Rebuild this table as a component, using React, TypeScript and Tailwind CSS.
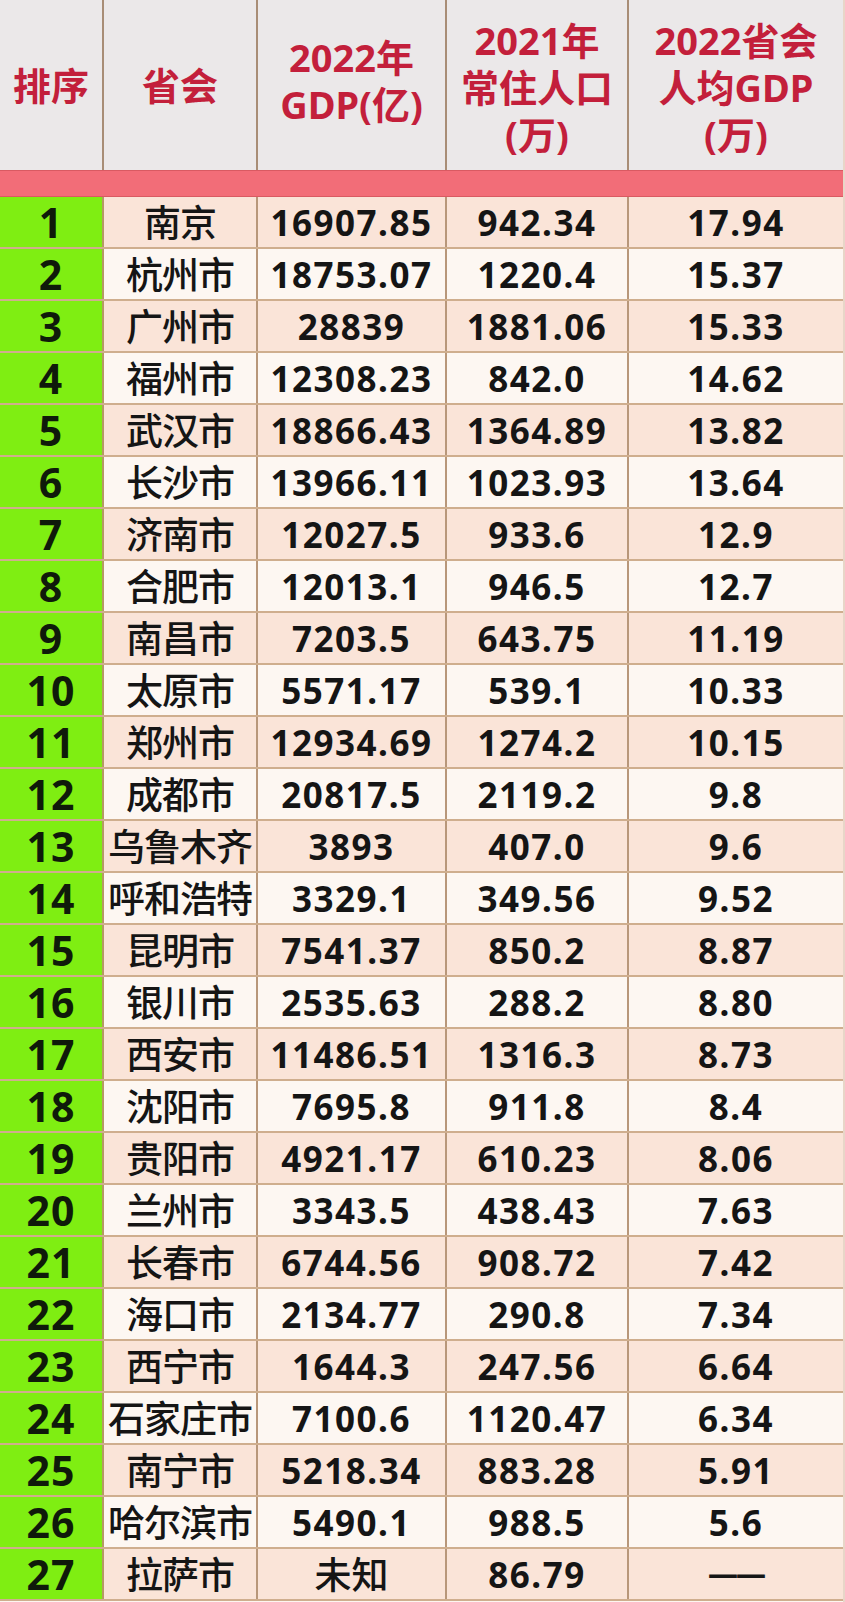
import React from "react";

const rows: [string, string, string, string][] = [
  ["南京", "16907.85", "942.34", "17.94"],
  ["杭州市", "18753.07", "1220.4", "15.37"],
  ["广州市", "28839", "1881.06", "15.33"],
  ["福州市", "12308.23", "842.0", "14.62"],
  ["武汉市", "18866.43", "1364.89", "13.82"],
  ["长沙市", "13966.11", "1023.93", "13.64"],
  ["济南市", "12027.5", "933.6", "12.9"],
  ["合肥市", "12013.1", "946.5", "12.7"],
  ["南昌市", "7203.5", "643.75", "11.19"],
  ["太原市", "5571.17", "539.1", "10.33"],
  ["郑州市", "12934.69", "1274.2", "10.15"],
  ["成都市", "20817.5", "2119.2", "9.8"],
  ["乌鲁木齐", "3893", "407.0", "9.6"],
  ["呼和浩特", "3329.1", "349.56", "9.52"],
  ["昆明市", "7541.37", "850.2", "8.87"],
  ["银川市", "2535.63", "288.2", "8.80"],
  ["西安市", "11486.51", "1316.3", "8.73"],
  ["沈阳市", "7695.8", "911.8", "8.4"],
  ["贵阳市", "4921.17", "610.23", "8.06"],
  ["兰州市", "3343.5", "438.43", "7.63"],
  ["长春市", "6744.56", "908.72", "7.42"],
  ["海口市", "2134.77", "290.8", "7.34"],
  ["西宁市", "1644.3", "247.56", "6.64"],
  ["石家庄市", "7100.6", "1120.47", "6.34"],
  ["南宁市", "5218.34", "883.28", "5.91"],
  ["哈尔滨市", "5490.1", "988.5", "5.6"],
  ["拉萨市", "未知", "86.79", "——"],
];

const cols = "grid grid-cols-[104px_154px_189px_182px_1fr]";

export default function App() {
  return (
    <div
      className="w-[845px] h-[1602px] overflow-hidden bg-[#fdf6f0] border-r-2 border-[#e8d6c8] leading-none"
      style={{ fontFamily: '"Noto Sans", "Noto Sans CJK SC", sans-serif' }}
    >
      {/* 表头 */}
      <div className={`${cols} h-[170px] bg-[#ebe8e9] text-[#c31f3b] font-bold text-[38px] leading-[47px] text-center`}>
        <div className="flex items-center justify-center border-r-2 border-[#a88d76]">排序</div>
        <div className="flex items-center justify-center border-r-2 border-[#a88d76]">省会</div>
        <div className="flex flex-col items-center justify-center border-r-2 border-[#a88d76] pb-2">
          <span>2022年</span>
          <span>GDP(亿)</span>
        </div>
        <div className="flex flex-col items-center justify-center border-r-2 border-[#a88d76] pt-1">
          <span>2021年</span>
          <span>常住人口</span>
          <span>(万)</span>
        </div>
        <div className="flex flex-col items-center justify-center pt-1">
          <span>2022省会</span>
          <span>人均GDP</span>
          <span>(万)</span>
        </div>
      </div>
      <div className="h-[27px] bg-[#f26d78] border-y border-[#d95a62]" />

      {/* 数据行 */}
      {rows.map((r, i) => (
        <div
          key={i}
          className={`${cols} h-[52px] border-b-2 border-[#cfae8e] leading-none ${i % 2 === 0 ? "bg-[#fae4d8]" : "bg-[#fdf7f2]"}`}
        >
          <div className="flex items-center justify-center bg-[#7fee12] border-r-2 border-[#b59a63] text-[41px] font-bold text-[#0f1a0a] tracking-[1px]">
            {i + 1}
          </div>
          <div className="flex items-center justify-center border-r-2 border-[#b8977a] text-[37px] font-medium text-[#151515] whitespace-nowrap tracking-[-1px]">
            {r[0]}
          </div>
          <div
            className={`flex items-center justify-center border-r-2 border-[#b8977a] text-[#151515] ${
              r[1] === "未知" ? "text-[37px] font-medium" : "text-[35px] font-bold tracking-[1.5px]"
            }`}
          >
            {r[1]}
          </div>
          <div className="flex items-center justify-center border-r-2 border-[#b8977a] text-[35px] font-bold text-[#151515] tracking-[1.5px]">
            {r[2]}
          </div>
          <div className="flex items-center justify-center text-[35px] font-bold text-[#151515] tracking-[1.5px]">
            {r[3] === "——" ? <span className="text-[30px] tracking-[-2px]">——</span> : r[3]}
          </div>
        </div>
      ))}
    </div>
  );
}
